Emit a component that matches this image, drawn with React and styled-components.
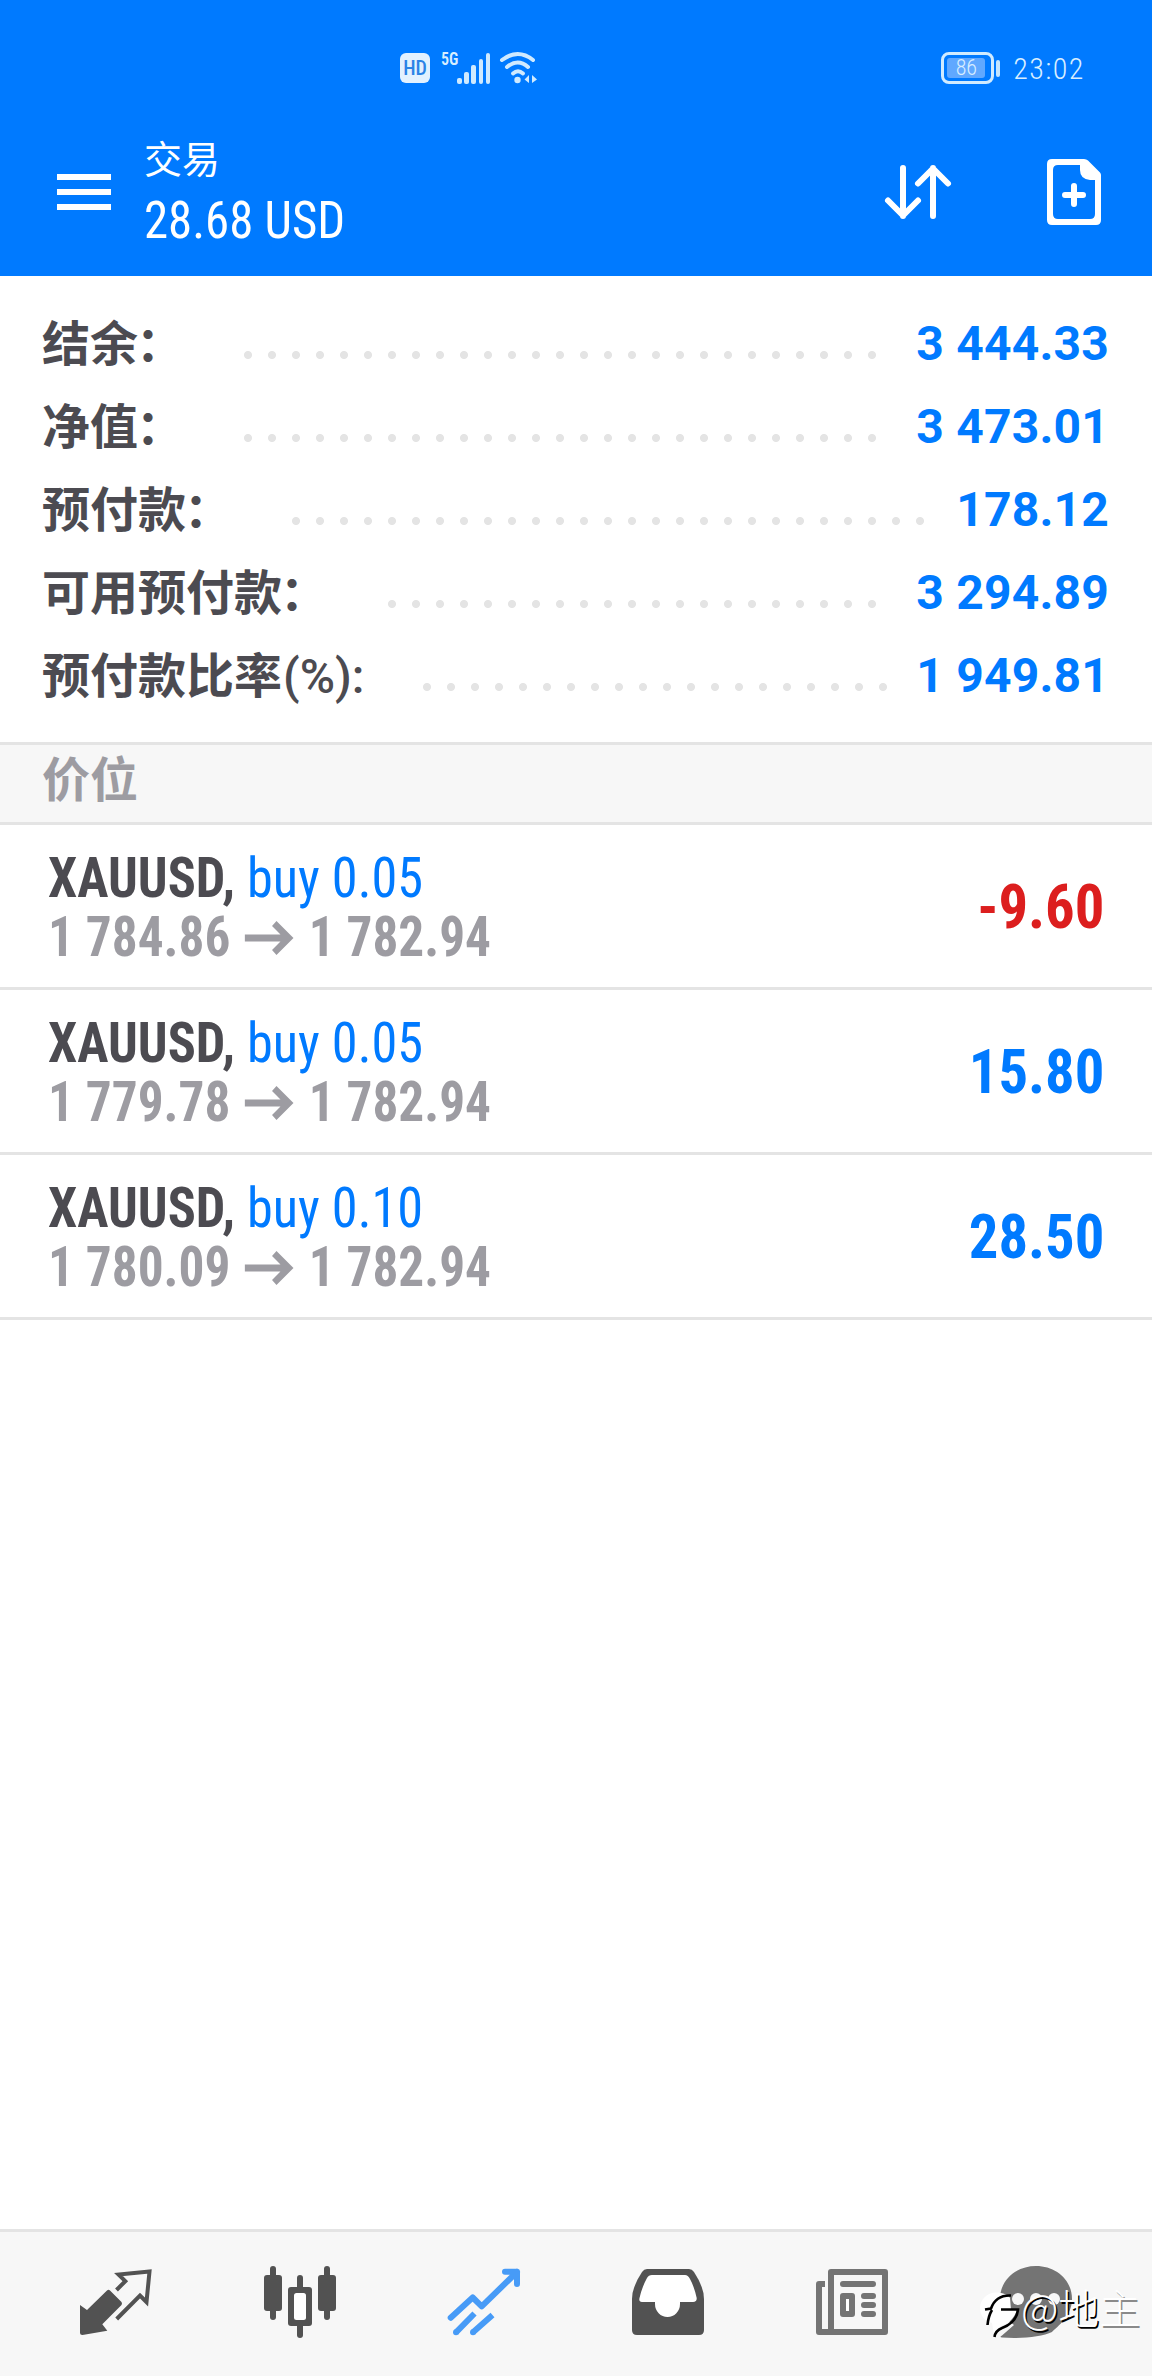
import React from "react";
import styled, { createGlobalStyle } from "styled-components";

const summary = [
  { label: "结余", suffix: "：", dots: 27, value: "3 444.33" },
  { label: "净值", suffix: "：", dots: 27, value: "3 473.01" },
  { label: "预付款", suffix: "：", dots: 27, value: "178.12" },
  { label: "可用预付款", suffix: "：", dots: 21, value: "3 294.89" },
  { label: "预付款比率", suffix: "(%):", latin: true, dots: 20, value: "1 949.81" },
];

const positions = [
  { id: 1, symbol: "XAUUSD", side: "buy 0.05", open: "1 784.86", current: "1 782.94", profit: "-9.60" },
  { id: 2, symbol: "XAUUSD", side: "buy 0.05", open: "1 779.78", current: "1 782.94", profit: "15.80" },
  { id: 3, symbol: "XAUUSD", side: "buy 0.10", open: "1 780.09", current: "1 782.94", profit: "28.50" },
];

export default function App() {
  return (
    <Screen>
      <GlobalStyle />
      <Header>
        <StatusBar />
        <AppBar>
          <MenuIcon />
          <Titles>
            <Title>交易</Title>
            <Total>28.68 USD</Total>
          </Titles>
          <SortIcon />
          <NewOrderIcon />
        </AppBar>
      </Header>

      <Summary>
        {summary.map((line) => (
          <SummaryRow key={line.label}>
            <Label>
              {line.label}
              <Suffix $latin={line.latin}>{line.suffix}</Suffix>
            </Label>
            <Leader $dots={line.dots} />
            <Amount>{line.value}</Amount>
          </SummaryRow>
        ))}
      </Summary>

      <SectionTitle>价位</SectionTitle>
      <Positions>
        {positions.map((position) => (
          <Position key={position.id} position={position} />
        ))}
      </Positions>

      <TabBar />
    </Screen>
  );
}

function Position({ position }) {
  return (
    <PositionRow>
      <div>
        <Deal>
          <b>{position.symbol},</b> <span>{position.side}</span>
        </Deal>
        <Prices>
          <span>{position.open}</span>
          <svg width="52" height="34" viewBox="0 0 52 34">
            <path d="M0 17H47M31.500 2.500L47 17L31.500 31.500" fill="none" stroke="#9d9ca2" strokeWidth="7" />
          </svg>
          <span>{position.current}</span>
        </Prices>
      </div>
      <Profit $loss={position.profit.startsWith("-")}>{position.profit}</Profit>
    </PositionRow>
  );
}

function StatusBar() {
  return (
    <StatusWrapper>
      <HdBadge>HD</HdBadge>
      <Network>5G</Network>
      <Signal>
        {[6, 12, 19, 25, 31].map((height) => (
          <SignalBar key={height} $height={height} />
        ))}
      </Signal>
      <svg width="40" height="32" viewBox="0 0 40 32">
        <g fill="none" stroke="#cfeaff" strokeWidth="4" strokeLinecap="round">
          <path d="M3 8Q19 -4 34 8" />
          <path d="M8 15Q19 6 29 15" />
          <path d="M14 21.500Q19 17 24 21.500" />
        </g>
        <circle cx="18.500" cy="28" r="3.200" fill="#cfeaff" />
        <path d="M30 23V31L25.500 27.500ZM33 23V31L38 27.500Z" fill="#cfeaff" />
      </svg>
      <Battery>
        <BatteryLevel>86</BatteryLevel>
      </Battery>
      <BatteryCap />
      <Clock>23:02</Clock>
    </StatusWrapper>
  );
}

function MenuIcon() {
  return (
    <svg width="54" height="36" viewBox="0 0 54 36">
      <path d="M0 3H54M0 18H54M0 33H54" stroke="#fff" strokeWidth="6" />
    </svg>
  );
}

function SortIcon() {
  return (
    <svg width="72" height="72" viewBox="0 0 72 72">
      <g fill="none" stroke="#fff" strokeWidth="6" strokeLinecap="round" strokeLinejoin="round">
        <path d="M21 12V60M6 44.500L21 59.500L36 44.500" />
        <path d="M51 60V12M36 27.500L51 12.500L66 27.500" />
      </g>
    </svg>
  );
}

function NewOrderIcon() {
  return (
    <svg width="72" height="72" viewBox="0 0 72 72">
      <path
        fill="#fff"
        fillRule="evenodd"
        d="M14 3H46Q48.500 3 50 4.500L62 16.500Q63 17.500 63 19V64Q63 69 58 69H14Q9 69 9 64V8Q9 3 14 3ZM20 9Q15 9 15 14V58Q15 63 20 63H52Q57 63 57 58V24H52Q42 23 42 14V9Z"
      />
      <path d="M36 30V48M27 39H45" stroke="#fff" strokeWidth="6" strokeLinecap="round" />
    </svg>
  );
}

function TabBar() {
  return (
    <TabWrapper>
      <Tab>
        <svg width="72" height="72" viewBox="0 0 72 72">
          <path d="M0 39L7 44L27 24.500Q28.500 23 30 24.500L41.500 36Q42.500 37.500 41.500 39L22.300 58.300L27.300 64.700L2.500 69Q0 69 0 66.500Z" fill="#525252" />
          <path d="M36.500 24L45.300 15.200L38.500 8.500L69.500 5.500L66.500 36L60 29.500L36.700 53" fill="none" stroke="#525252" strokeWidth="4" />
        </svg>
      </Tab>
      <Tab>
        <svg width="72" height="72" viewBox="0 0 72 72">
          <g fill="#525252">
            <rect x="6" width="6" height="54" rx="3" />
            <rect y="9" width="18" height="36" rx="3" />
            <rect x="60" width="6" height="54" rx="3" />
            <rect x="54" y="9" width="18" height="36" rx="3" />
            <rect x="33" y="9" width="6" height="63" rx="3" />
            <rect x="24" y="21" width="24" height="39" rx="3" />
          </g>
          <rect x="30" y="27" width="12" height="27" rx="2.500" fill="#fff" />
        </svg>
      </Tab>
      <Tab>
        <svg width="72" height="72" viewBox="0 0 72 72">
          <g fill="none" stroke="#479bf7" strokeWidth="6">
            <path d="M2.700 51.700L24.700 31.500L33.700 40.300L69 6M57 5.700H69V18" strokeLinecap="round" strokeLinejoin="round" />
            <path d="M8 66.300L26.500 47.500M25 66.300L44.500 49" />
          </g>
          <circle cx="8" cy="66.300" r="3" fill="#479bf7" />
          <circle cx="25" cy="66.300" r="3" fill="#479bf7" />
        </svg>
      </Tab>
      <Tab>
        <svg width="72" height="72" viewBox="0 0 72 72">
          <path d="M15 3H57Q60 3 62 6Q72 21 72 33V64Q72 69 67 69H5Q0 69 0 64V33Q0 21 10 6Q12 3 15 3Z" fill="#525252" />
          <path d="M20 9H53Q56 9 58 13Q62 20 64.700 32Q65 36 61 36H48V38A12.500 13 0 0 1 23 38V36H10Q6.500 36 7.500 32Q10 21 15 12Q16.500 9 20 9Z" fill="#fff" />
        </svg>
      </Tab>
      <Tab>
        <svg width="72" height="72" viewBox="0 0 72 72">
          <g fill="none" stroke="#747474" strokeWidth="6" strokeLinejoin="round">
            <rect x="15" y="6" width="54" height="60" />
            <path d="M9 18H3V66H15" />
            <path d="M27 18H57M48 30H57M48 39H57M48 48H57" strokeLinecap="round" />
            <rect x="27" y="30" width="9" height="18" fill="#fff" />
          </g>
        </svg>
      </Tab>
      <Tab>
        <svg width="72" height="72" viewBox="0 0 72 72">
          <path d="M36 0C56 0 72 14 72 33C72 50 58 60 52 66C42 71 20 73 2 71.500Q-1 71 2 69.500L14 59C5 53 0 44 0 33C0 14 16 0 36 0Z" fill="#747474" />
          <g fill="#f7f7f7">
            <circle cx="18" cy="33" r="6" />
            <circle cx="36" cy="33" r="6" />
            <circle cx="54" cy="33" r="6" />
          </g>
        </svg>
        <Signature>
          <svg width="41" height="48" viewBox="0 0 41 48">
            <path d="M16 2.500C23 2.500 29 5 30 8L31 20H37C34 29 28 34 20 36L14 45L12 33C4 31 0 25 0 18C0 10 7 2.500 16 2.500Z" fill="#fff" />
            <g fill="none" stroke="#000" strokeWidth="2.600">
              <path d="M5 19.500L11 18.500C14 10 20 5 31 5.500" />
              <path d="M12 20C9 25 8 29 7.500 35" />
              <path d="M21 19.500H38C37 29 30 35 22 38C17 40 15 43 14.500 47" />
            </g>
          </svg>
          <span>@地</span>
          <SignatureEnd>主</SignatureEnd>
        </Signature>
      </Tab>
    </TabWrapper>
  );
}

const GlobalStyle = createGlobalStyle`
  * {
    box-sizing: border-box;
  }

  body {
    margin: 0;
    background-color: #fff;
    font-family: Roboto, "Noto Sans CJK SC", sans-serif;
  }

  svg {
    display: block;
    flex-shrink: 0;
    overflow: visible;
  }
`;

const Screen = styled.div`
  width: 1152px;
  height: 2376px;
  display: flex;
  flex-direction: column;
  overflow: hidden;
`;

const Header = styled.header`
  height: 276px;
  background-color: #007aff;
  color: #fff;
`;

const StatusWrapper = styled.div`
  height: 136px;
  display: flex;
  align-items: center;
  padding-left: 400px;
  color: #d8eeff;
`;

const HdBadge = styled.div`
  width: 30px;
  height: 30px;
  border-radius: 6px;
  background-color: #e2f1ff;
  color: #2b83e6;
  font-size: 20px;
  font-stretch: 85%;
  font-weight: 500;
  line-height: 31px;
  text-align: center;
`;

const Network = styled.span`
  width: 16px;
  margin-left: 11px;
  margin-bottom: 19px;
  font-family: "Roboto Condensed", Roboto, sans-serif;
  font-stretch: 75%;
  font-size: 19px;
  font-weight: 600;
  line-height: 20px;
  transform: scaleX(0.84);
  transform-origin: left;
`;

const Signal = styled.div`
  height: 31px;
  display: flex;
  align-items: flex-end;
  gap: 2.600px;
  margin-right: 9px;
`;

const SignalBar = styled.div`
  width: 4.600px;
  height: ${(props) => props.$height}px;
  border-radius: 2px;
  background-color: #cfeaff;
`;

const Battery = styled.div`
  width: 53px;
  height: 32px;
  padding: 3px;
  margin-left: 402px;
  border: 3px solid #d0ebff;
  border-radius: 8px;
`;

const BatteryLevel = styled.div`
  width: 38px;
  height: 20px;
  border-radius: 3px;
  background-color: #60a8ff;
  font-size: 22px;
  font-stretch: 80%;
  font-weight: 350;
  line-height: 20px;
  text-align: center;
`;

const BatteryCap = styled.div`
  width: 4px;
  height: 17px;
  margin-left: 2px;
  border-radius: 2px;
  background-color: #c4e5ff;
`;

const Clock = styled.span`
  margin-left: 13px;
  font-size: 30px;
  font-stretch: 85%;
  font-weight: 300;
  letter-spacing: 1.400px;
`;

const AppBar = styled.div`
  display: flex;
  align-items: center;
  height: 112px;
  padding: 0 42px 0 57px;

  svg + svg {
    margin-left: 84px;
  }
`;

const Titles = styled.div`
  flex: 1;
  margin-left: 33px;
  padding-top: 2px;
`;

const Title = styled.div`
  font-size: 38px;
  line-height: 50px;
`;

/* the condensed face is still a touch wide, so its lines are squeezed a bit more */
const Total = styled.div`
  margin-top: 5px;
  font-family: "Roboto Condensed", Roboto, sans-serif;
  font-stretch: 75%;
  font-size: 51px;
  line-height: 62px;
  transform: scaleX(0.958);
  transform-origin: left;
`;

const Summary = styled.section`
  height: 466px;
  padding: 26px 43px 0 42px;
`;

const SummaryRow = styled.div`
  display: flex;
  align-items: center;
  height: 83px;
  white-space: nowrap;
`;

const Label = styled.span`
  padding-top: 1px;
  color: #4c4b51;
  font-size: 48px;
  font-weight: 700;
  line-height: 85px;
`;

const Suffix = styled.span`
  margin-left: ${(props) => (props.$latin ? 1 : -2)}px;
  margin-right: ${(props) => (props.$latin ? 1 : 2)}px;
  font-weight: ${(props) => (props.$latin ? 550 : 700)};
`;

const Leader = styled.div`
  width: ${(props) => props.$dots * 24}px;
  height: 8px;
  margin-top: 23px;
  margin-left: 58px;
  background: radial-gradient(circle at 4px 4px, #e4e4e4 3.600px, transparent 4.400px) 0 0 / 24px 8px;
`;

const Amount = styled.span`
  margin-left: auto;
  color: #007aff;
  font-size: 48px;
  font-weight: 700;
  letter-spacing: 0.200px;
`;

const SectionTitle = styled.h2`
  height: 83px;
  margin: 0;
  padding-left: 42px;
  border-top: 3px solid #e4e4e4;
  border-bottom: 3px solid #e4e4e4;
  background-color: #f7f7f7;
  color: #9d9ca2;
  font-size: 48px;
  font-weight: 700;
  line-height: 72px;
`;

const Positions = styled.main`
  flex: 1;
`;

const PositionRow = styled.div`
  display: flex;
  align-items: center;
  justify-content: space-between;
  height: 165px;
  padding: 4px 48px 0;
  border-bottom: 3px solid #e4e4e4;
  font-family: "Roboto Condensed", Roboto, sans-serif;
  font-stretch: 75%;
`;

const Deal = styled.div`
  color: #007aff;
  font-size: 55px;
  line-height: 59px;
  transform: scaleX(0.95);
  transform-origin: left;

  b {
    color: #4c4b51;
  }
`;

const Prices = styled.div`
  display: flex;
  align-items: center;
  gap: 16px;
  color: #9d9ca2;
  font-size: 55px;
  font-weight: 700;
  line-height: 59px;
  transform: scaleX(0.933);
  transform-origin: left;
`;

const Profit = styled.span`
  margin-bottom: 3px;
  color: ${(props) => (props.$loss ? "#dc1e1e" : "#007aff")};
  font-size: 62px;
  font-weight: 700;
  transform: scaleX(0.946);
  transform-origin: right;
`;

const TabWrapper = styled.nav`
  display: flex;
  height: 147px;
  padding: 34px 24px 0;
  border-top: 3px solid #e4e4e4;
  background-color: #f7f7f7;
`;

const Tab = styled.div`
  position: relative;
  width: 184px;
  display: flex;
  justify-content: center;
  align-items: flex-start;
`;

const Signature = styled.div`
  position: absolute;
  left: 36px;
  top: 24px;
  display: flex;
  color: #fff;
  font-family: "Noto Sans CJK SC", sans-serif;
  font-size: 41px;
  font-weight: 300;
  line-height: 32px;
  white-space: nowrap;
  text-shadow: 1.500px 1.500px 0 #000;
`;

const SignatureEnd = styled.span`
  text-shadow: 1.500px 1.500px 0 #8a8a8a;
`;
